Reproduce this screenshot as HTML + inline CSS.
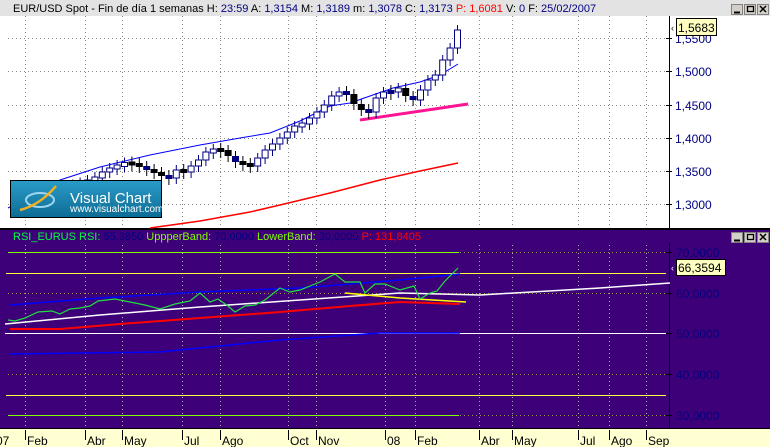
<!DOCTYPE html>
<html><head><meta charset="utf-8"><style>
html,body{margin:0;padding:0;width:770px;height:447px;overflow:hidden;background:#fff;font-family:"Liberation Sans",Arial,sans-serif}
svg{display:block}
</style></head><body>
<svg id="s" width="770" height="447" xmlns="http://www.w3.org/2000/svg" font-family="Liberation Sans, Arial, sans-serif">
<rect x="0" y="0" width="770" height="16" fill="#e3e3e3"/>
<rect x="0" y="16" width="770" height="212" fill="#fff"/>
<rect x="0" y="228" width="770" height="2" fill="#000"/>
<rect x="0" y="230" width="770" height="198" fill="#3e0078"/>
<rect x="0" y="428" width="770" height="19" fill="#ffffd2"/>
<line x1="669.5" y1="16" x2="669.5" y2="228" stroke="#000"/>
<line x1="669.5" y1="243" x2="669.5" y2="428" stroke="#000"/>
<line x1="0" y1="428.5" x2="770" y2="428.5" stroke="#000"/>
<g id="g"></g>
<text x="13" y="12" font-size="11" fill="#000">EUR/USD Spot - Fin de día 1 semanas  H: <tspan fill="#000080">23:59</tspan>  A: <tspan fill="#000080">1,3154</tspan>  M: <tspan fill="#000080">1,3189</tspan>  m: <tspan fill="#000080">1,3078</tspan>  C: <tspan fill="#000080">1,3173</tspan>  <tspan fill="#f00">P: 1,6081</tspan>  V: <tspan fill="#000080">0</tspan>  F: <tspan fill="#000080">25/02/2007</tspan></text>
<text x="13" y="240" font-size="11" fill="#00ff40">RSI_EURUS  RSI: <tspan fill="#000080">55,3850</tspan>  <tspan fill="#80ff00">UppperBand: </tspan><tspan fill="#000080">70,0000</tspan>  <tspan fill="#80ff00">LowerBand: </tspan><tspan fill="#000080">30,0000</tspan>  <tspan fill="#f00">P: 131,8405</tspan></text>
</svg>
<script>
(function(){
var g=document.getElementById('g'),h='';
function L(x1,y1,x2,y2,c,w,d){h+='<line x1="'+x1+'" y1="'+y1+'" x2="'+x2+'" y2="'+y2+'" stroke="'+c+'" stroke-width="'+(w||1)+'"'+(d?' stroke-dasharray="'+d+'"':'')+'/>';}
function P(pts,c,w){h+='<polyline points="'+pts+'" fill="none" stroke="'+c+'" stroke-width="'+(w||1)+'"/>';}
function T(x,y,s,c,sz,a){h+='<text x="'+x+'" y="'+y+'" font-size="'+(sz||12)+'" fill="'+c+'"'+(a?' '+a:'')+'>'+s+'</text>';}
var vx=[25,85,122,182,220,288,316,385,415,479,512,578,609,646];
vx.forEach(function(x){L(x+.5,16,x+.5,228,'#888',1,'1 3');L(x+.5,245,x+.5,428,'#aaa',1,'1 3');});
var py=[38,71,105,138,171,204],pl=['1,5500','1,5000','1,4500','1,4000','1,3500','1,3000'];
py.forEach(function(y,i){L(8,y+.5,669,y+.5,'#888',1,'1 3');L(666,y+.5,672,y+.5,'#000');T(675,y+5,pl[i],'#000080',12);});
P('150,228 200,221 250,212 280,205 330,193 380,180 420,171 458,163','#f00',1.5);
P('8,208 60,180 100,167 150,155 200,145 240,138 270,133 300,121 330,106 350,103 393,88 420,82 440,75 458,64','#00f',1);
L(360,120,468,104,'#ff1493',3);
var ys=[205,203,200,199,196,195,190,188,185,184,180,178,172,168,166,163,164,166,170,172,176,178,170,172,166,160,152,150,150,156,162,164,166,158,150,144,138,132,126,124,118,112,105,96,92,94,104,110,112,98,92,92,88,96,100,90,80,75,60,48,30];
for(var i=0;i<ys.length;i++){var x=10+i*7.4,c=ys[i],o=i?ys[i-1]:c+4;var tp=Math.min(o,c),bt=Math.max(o,c);if(bt-tp<4){var m=(tp+bt)/2;tp=m-2;bt=m+2;}
var up=c<o;L(x+3.5,tp-5,x+3.5,bt+6,up?'#000080':'#000');
if(up)h+='<rect x="'+(x+.5)+'" y="'+tp+'" width="6" height="'+(bt-tp)+'" fill="#fff" stroke="#000080"/>';
else h+='<rect x="'+x+'" y="'+tp+'" width="7" height="'+(bt-tp)+'" fill="'+(i%3?'#000':'#000080')+'"/>';}
h+='<defs><linearGradient id="lg" x1="0" y1="0" x2="0" y2="1"><stop offset="0" stop-color="#2a9bc8"/><stop offset="1" stop-color="#0d6c94"/></linearGradient></defs>';
h+='<rect x="10.5" y="180.5" width="151" height="37" fill="url(#lg)" stroke="#000"/>';
h+='<ellipse cx="40" cy="200" rx="14" ry="7" fill="none" stroke="#9fd4ef" stroke-width="2"/>';
h+='<path d="M20 210 Q40 205 56 186" stroke="#f0b020" stroke-width="2.5" fill="none"/>';
T(70,203,'Visual Chart','#fff',15);T(70,212,'www.visualchart.com','#fff',10);
h+='<rect x="676.5" y="18.5" width="40" height="17" fill="#ffffc0" stroke="#000"/>';T(678,32,'1,5683','#000',12);T(671,31,'‹','#000',9);
function btns(y){[731,744,757].forEach(function(x){h+='<rect x="'+x+'.5" y="'+y+'.5" width="11" height="10" fill="#d4d0c8" stroke="#808080"/>';});
L(734,y+8.5,740,y+8.5,'#000',2);h+='<rect x="747.5" y="'+(y+2.5)+'" width="6" height="5" fill="none" stroke="#000" stroke-width="1.3"/>';
L(760,y+2,766,y+8,'#000',1.5);L(766,y+2,760,y+8,'#000',1.5);}
btns(4);btns(232);
var ry=[252,293,333,374,415],rl=['70,0000','60,0000','50,0000','40,0000','30,0000'];
ry.forEach(function(y,i){L(8,y+.5,669,y+.5,'#9a9a40',1,'1 3');L(666,y+.5,672,y+.5,'#000');T(676,y+5,rl[i],'#000080',12);});
L(8,252.5,459,252.5,'#80ff00');L(8,415.5,459,415.5,'#80ff00');
L(6,273.5,666,273.5,'#ffff40');L(6,395.5,666,395.5,'#ffff40');
L(5,333.5,666,333.5,'#fff');
P('5,324 100,315 200,307 300,300 400,293 480,295 600,288 670,283','#fff',1.5);
P('10,329 60,329 120,324 200,318 280,312 350,306 400,302 460,304','#f00',2);
P('10,305 100,298 200,292 300,288 400,280 460,274','#00f',1.5);
P('10,354 160,352 280,340 380,333 460,333','#00f',1.5);
P('345,293 400,298 466,302','#ff0',1.5);
P('8,320 15,321 25,318 38,312 52,311 60,314 70,309 80,308 90,306 98,301 115,299 130,302 145,305 160,309 175,304 190,301 200,293 210,302 218,299 228,306 235,312 245,306 255,305 265,300 280,288 290,292 300,290 310,286 320,282 335,274 345,282 360,282 365,293 375,284 385,284 400,290 414,286 420,299 430,293 437,291 445,281 458,268','#20e040',1.2);
h+='<rect x="676.5" y="259.5" width="49" height="16" fill="#ffffc0" stroke="#000"/>';T(678,272,'66,3594','#000',12);T(671,271,'‹','#fff',9);
var xl=[[0,'07'],[25,'Feb'],[85,'Abr'],[122,'May'],[182,'Jul'],[220,'Ago'],[288,'Oct'],[316,'Nov'],[385,'08'],[415,'Feb'],[479,'Abr'],[512,'May'],[578,'Jul'],[609,'Ago'],[646,'Sep']];
xl.forEach(function(a){if(a[0])L(a[0]+.5,430,a[0]+.5,440,'#000');T(a[0]+(a[0]?2:-4),445,a[1],'#000',12);});
g.innerHTML=h;
})();
</script>
</body></html>
